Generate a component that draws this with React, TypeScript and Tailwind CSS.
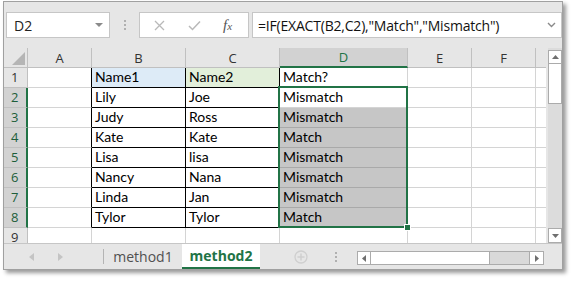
import React from "react";

const rows: string[][] = [
  ["1", "", "Name1", "Name2", "Match?"],
  ["2", "", "Lily", "Joe", "Mismatch"],
  ["3", "", "Judy", "Ross", "Mismatch"],
  ["4", "", "Kate", "Kate", "Match"],
  ["5", "", "Lisa", "lisa", "Mismatch"],
  ["6", "", "Nancy", "Nana", "Mismatch"],
  ["7", "", "Linda", "Jan", "Mismatch"],
  ["8", "", "Tylor", "Tylor", "Match"],
];

const cols = ["A", "B", "C", "D", "E", "F"];

function HeaderRow() {
  return (
    <>
      <div className="relative bg-[#e6e6e6] border-r border-b border-[#c0c0c0]">
        <svg className="absolute right-[2px] bottom-[2px]" width="13" height="13" viewBox="0 0 13 13">
          <polygon points="13,0 13,13 0,13" fill="#b5b5b5" />
        </svg>
      </div>
      {cols.map((c) => (
        <div
          key={c}
          className={
            c === "D"
              ? "flex items-center justify-center bg-[#d2d2d2] border-r border-r-[#c0c0c0] border-b-2 border-b-[#217346] text-[#217346]"
              : "flex items-center justify-center bg-[#e6e6e6] border-r border-b border-[#c0c0c0] text-[#333]"
          }
        >
          <span className="text-[13px] leading-none pt-[1px]">{c}</span>
        </div>
      ))}
      <div className="bg-[#e6e6e6] border-b border-[#c0c0c0]" />
    </>
  );
}

function DataRow({ r, idx }: { r: string[]; idx: number }) {
  const sel = idx >= 1;
  const rowHdr = sel
    ? "flex items-center pl-[7px] bg-[#d2d2d2] border-r-2 border-r-[#217346] border-b border-b-[#c0c0c0] text-[#1d5e3a]"
    : "flex items-center pl-[7px] bg-[#e6e6e6] border-r border-b border-[#c0c0c0] text-[#333]";
  const aCls = "border-r border-r-black border-b border-b-[#d4d4d4] bg-white";
  const bCls =
    "flex items-end pl-[3px] pb-[1px] border-r border-b border-black " + (idx === 0 ? "bg-[#ddebf7]" : "bg-white");
  const cCls =
    "flex items-end pl-[3px] pb-[1px] border-r border-b border-black " + (idx === 0 ? "bg-[#e2efda]" : "bg-white");
  const dCls =
    idx >= 2
      ? "flex items-end pl-[3px] pb-[1px] border-r border-r-[#d4d4d4] border-b border-b-[#a9a9a9] bg-[#c6c6c6]"
      : "flex items-end pl-[3px] pb-[1px] border-r border-b border-[#d4d4d4] bg-white";
  const plain = "border-r border-b border-[#d4d4d4] bg-white";
  return (
    <>
      <div className={rowHdr}>
        <span className="text-[13px] leading-none">{r[0]}</span>
      </div>
      <div className={aCls} />
      <div className={bCls}>
        <span className="cell-text">{r[2]}</span>
      </div>
      <div className={cCls}>
        <span className="cell-text">{r[3]}</span>
      </div>
      <div className={dCls}>
        <span className="cell-text">{r[4]}</span>
      </div>
      <div className={plain} />
      <div className={plain} />
      <div className="border-b border-[#d4d4d4] bg-white" />
    </>
  );
}

function Row9() {
  return (
    <>
      <div className="flex items-start pl-[7px] pt-[3px] bg-[#e6e6e6] border-r border-[#c0c0c0] text-[#333]">
        <span className="text-[13px] leading-none">9</span>
      </div>
      <div className="border-r border-[#d4d4d4] bg-white" />
      <div className="border-r border-[#d4d4d4] bg-white" />
      <div className="border-r border-[#d4d4d4] bg-white" />
      <div className="border-r border-[#d4d4d4] bg-white" />
      <div className="border-r border-[#d4d4d4] bg-white" />
      <div className="border-r border-[#d4d4d4] bg-white" />
      <div className="bg-white" />
    </>
  );
}

export default function App() {
  return (
    <div
      className="w-[573px] h-[281px] bg-white pt-[1px] pl-[3px]"
      style={{ fontFamily: "'Open Sans', 'Noto Sans', sans-serif" }}
    >
      <style>{`.cell-text{font-family:Lato,'Open Sans',sans-serif;font-size:14px;line-height:18px;color:#000;white-space:nowrap}`}</style>
      <div className="w-[560px] h-[269px] border border-[#a0a0a0] bg-[#e6e6e6] shadow-[3px_3px_4px_rgba(0,0,0,0.4)] flex flex-col">
        {/* Formula bar */}
        <div className="h-[46px] flex items-start pt-[10px] pl-[2px]">
          <div className="w-[104px] h-[26px] bg-white border border-[#c6c6c6] flex items-center justify-between pl-[7px] pr-[6px]">
            <span className="text-[14px] text-[#222]">D2</span>
            <svg width="8" height="5" viewBox="0 0 8 5">
              <polygon points="0,0 8,0 4,4" fill="#8a8a8a" />
            </svg>
          </div>
          <div className="w-[29px] h-[26px] flex flex-col items-center justify-center gap-[2px]">
            <div className="w-[2px] h-[2px] bg-[#b0b0b0]" />
            <div className="w-[2px] h-[2px] bg-[#b0b0b0]" />
            <div className="w-[2px] h-[2px] bg-[#b0b0b0]" />
          </div>
          <div className="w-[110px] h-[26px] bg-white border border-[#c6c6c6] flex items-center pl-[14px]">
            <svg width="11" height="11" viewBox="0 0 11 11">
              <path d="M1 1 L10 10 M10 1 L1 10" stroke="#b9b9b9" strokeWidth="1.3" />
            </svg>
            <svg className="ml-[23px]" width="13" height="11" viewBox="0 0 13 11">
              <path d="M1 6 L4.5 9.5 L12 1.5" stroke="#b9b9b9" strokeWidth="1.5" fill="none" />
            </svg>
            <span
              className="ml-[22px] text-[15px] italic text-[#555] leading-none"
              style={{ fontFamily: "'Liberation Serif', serif" }}
            >
              f<span className="text-[11px]">x</span>
            </span>
          </div>
          <div className="ml-[3px] flex-1 h-[26px] bg-white border border-[#c6c6c6] flex items-center justify-between pl-[5px] pr-[5px]">
            <span className="text-[14px] text-[#111] tracking-[-0.2px]">=IF(EXACT(B2,C2),"Match","Mismatch")</span>
            <svg width="9" height="6" viewBox="0 0 9 6">
              <path d="M1 1 L4.5 4.5 L8 1" stroke="#8a8a8a" strokeWidth="1.4" fill="none" />
            </svg>
          </div>
        </div>

        {/* Sheet + vertical scrollbar */}
        <div className="h-[195px] flex">
          <div className="relative w-[542px] grid grid-cols-[24px_64px_94px_94px_128px_64px_64px_10px] grid-rows-[20px_20px_20px_20px_20px_20px_20px_20px_20px_15px] overflow-hidden">
            <HeaderRow />
            {rows.map((r, i) => (
              <DataRow key={i} r={r} idx={i} />
            ))}
            <Row9 />
            <div className="absolute left-[274px] top-[38px] w-[130px] h-[142px] border-2 border-[#217346]" />
            <div className="absolute left-[400px] top-[176px] w-[7px] h-[7px] bg-[#217346] border border-white" />
          </div>
          <div className="ml-[2px] w-[14px] flex flex-col bg-[#dcdcdc]">
            <div className="mt-[2px] h-[14px] bg-white border border-[#ababab] flex items-center justify-center">
              <svg width="7" height="4" viewBox="0 0 7 4">
                <polygon points="0,4 7,4 3.5,0" fill="#6f6f6f" />
              </svg>
            </div>
            <div className="h-[40px] bg-white border border-[#ababab] border-t-0" />
            <div className="flex-1" />
            <div className="h-[15px] bg-white border border-[#ababab] flex items-center justify-center">
              <svg width="7" height="4" viewBox="0 0 7 4">
                <polygon points="0,0 7,0 3.5,4" fill="#6f6f6f" />
              </svg>
            </div>
          </div>
        </div>

        {/* Tab bar */}
        <div className="flex-1 border-t border-[#c6c6c6] flex items-stretch">
          <div className="w-[99px] flex items-center pl-[25px]">
            <svg width="5" height="8" viewBox="0 0 5 8">
              <polygon points="5,0 5,8 0,4" fill="#c4c4c4" />
            </svg>
            <svg className="ml-[24px]" width="5" height="8" viewBox="0 0 5 8">
              <polygon points="0,0 0,8 5,4" fill="#c4c4c4" />
            </svg>
          </div>
          <div className="w-[1px] my-[5px] bg-[#b4b4b4]" />
          <div className="w-[78px] flex items-center justify-center text-[14px] text-[#505050]">method1</div>
          <div className="w-[78px] bg-white border-b-2 border-[#217346] flex items-center justify-center text-[14px] font-bold text-[#217346]">
            method2
          </div>
          <div className="w-[97px] flex items-center pl-[34px]">
            <svg width="14" height="14" viewBox="0 0 14 14">
              <circle cx="7" cy="7" r="6" stroke="#cfcfcf" strokeWidth="1.3" fill="none" />
              <path d="M7 3.5 V10.5 M3.5 7 H10.5" stroke="#cfcfcf" strokeWidth="1.5" />
            </svg>
            <div className="ml-[27px] flex flex-col gap-[2px]">
              <div className="w-[2px] h-[2px] bg-[#b0b0b0]" />
              <div className="w-[2px] h-[2px] bg-[#b0b0b0]" />
              <div className="w-[2px] h-[2px] bg-[#b0b0b0]" />
            </div>
          </div>
          <div className="pt-[7px]">
            <div className="w-[187px] h-[14px] flex border border-[#ababab] bg-[#d9d9d9]">
              <div className="w-[13px] bg-white border-r border-[#ababab] flex items-center justify-center">
                <svg width="4" height="7" viewBox="0 0 4 7">
                  <polygon points="4,0 4,7 0,3.5" fill="#6f6f6f" />
                </svg>
              </div>
              <div className="w-[119px] bg-white border-r border-[#ababab]" />
              <div className="flex-1" />
              <div className="w-[14px] bg-white border-l border-[#ababab] flex items-center justify-center">
                <svg width="4" height="7" viewBox="0 0 4 7">
                  <polygon points="0,0 0,7 4,3.5" fill="#6f6f6f" />
                </svg>
              </div>
            </div>
          </div>
        </div>
      </div>
    </div>
  );
}
